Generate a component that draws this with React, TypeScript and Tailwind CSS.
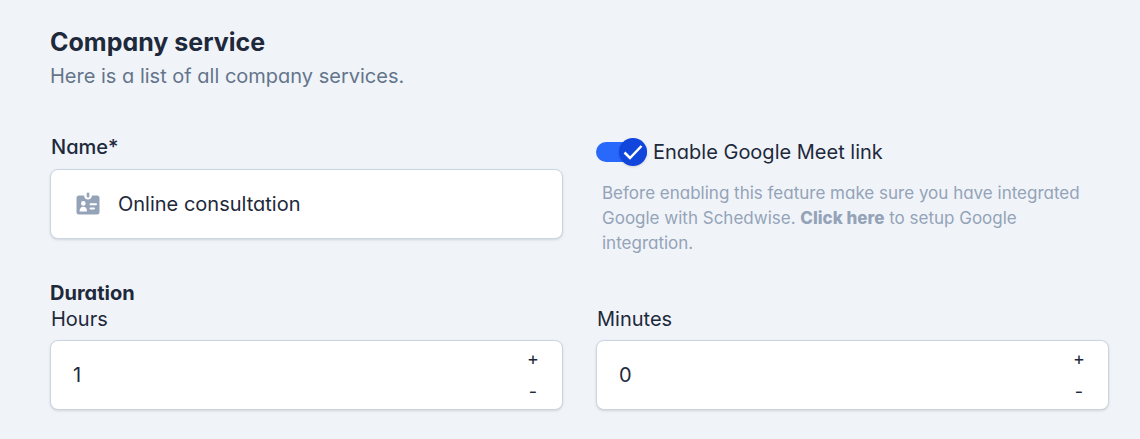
import { useState } from "react"

const inputClass =
  "block w-full h-[70px] rounded-lg border border-[#cbd5e1] bg-white text-[20px] text-[#1e293b] shadow-sm outline-none"

function BadgeIcon() {
  return (
    <svg viewBox="0 0 24 24" className="w-6 h-6" fill="none" aria-hidden="true">
      <path
        d="M3 3.5h5c.3 2.600 1.900 4 4 4s3.700-1.400 4-4h5a2.500 2.500 0 0 1 2.500 2.500v14a2.500 2.500 0 0 1-2.500 2.500H3A2.500 2.500 0 0 1 .5 20V6A2.500 2.500 0 0 1 3 3.500z"
        fill="#94a3b8"
      />
      <rect x="10.700" y="0.500" width="2.600" height="5" rx="1.300" fill="#94a3b8" />
      <circle cx="7.300" cy="11.400" r="2.300" fill="#fff" />
      <path d="M3.600 19.400c0-3 1.300-4.600 3.700-4.600s3.700 1.600 3.700 4.600z" fill="#fff" />
      <path d="M14.500 12.200h5.500M14.500 16.500h3.500" stroke="#fff" strokeWidth="2" strokeLinecap="round" />
    </svg>
  )
}

interface NumberFieldProps {
  id: string
  label: string
  initial: number
}

function NumberField({ id, label, initial }: NumberFieldProps) {
  const [value, setValue] = useState(initial)

  return (
    <div>
      <label htmlFor={id} className="block pl-px text-[20px] leading-[26px] mb-2">
        {label}
      </label>
      <div className="relative">
        <input
          id={id}
          inputMode="numeric"
          value={value}
          onChange={(e) => setValue(Number(e.target.value) || 0)}
          className={`${inputClass} pl-[22px] pr-16`}
        />
        <div className="absolute inset-y-0 right-4 flex w-7 flex-col justify-center text-[18px] leading-6">
          <button type="button" aria-label={`Increase ${label}`} className="h-[33px]" onClick={() => setValue(value + 1)}>
            +
          </button>
          <button
            type="button"
            aria-label={`Decrease ${label}`}
            className="h-[33px]"
            onClick={() => setValue(Math.max(0, value - 1))}
          >
            -
          </button>
        </div>
      </div>
    </div>
  )
}

export default function App() {
  const [name, setName] = useState("Online consultation")
  const [meet, setMeet] = useState(true)

  return (
    <main className="min-h-screen bg-[#f0f4f9] pt-[26px] pb-7 pl-[50px] pr-[31px] font-['Inter',sans-serif] text-[#1e293b] [font-feature-settings:'cv11']">
      <h1 className="text-[25px] leading-8 font-bold">Company service</h1>
      <p className="text-[20px] leading-9 text-[#64748b]">Here is a list of all company services.</p>

      <div className="mt-10 grid grid-cols-2 gap-x-[33px]">
        <div>
          <label htmlFor="name" className="block pl-px text-[20px] leading-[26px] font-medium mb-[9px]">
            Name*
          </label>
          <div className="relative">
            <input
              id="name"
              value={name}
              onChange={(e) => setName(e.target.value)}
              className={`${inputClass} pl-[67px] pr-4`}
            />
            <span className="pointer-events-none absolute inset-y-0 left-[26px] flex items-center">
              <BadgeIcon />
            </span>
          </div>
        </div>

        <div>
          <label className="mt-1 flex h-7 items-center gap-[6px] text-[20px]">
            <input
              type="checkbox"
              role="switch"
              checked={meet}
              onChange={(e) => setMeet(e.target.checked)}
              className="peer sr-only"
            />
            <span className="flex h-5 w-[51px] items-center rounded-full bg-slate-300 peer-checked:justify-end peer-checked:bg-[#2868fb]">
              <span className="flex h-7 w-7 shrink-0 items-center justify-center rounded-full bg-[#1146dc] shadow-sm">
                {meet && (
                  <svg viewBox="0 0 20 20" className="h-5 w-5" fill="none" stroke="#fff" strokeWidth="2.500" aria-hidden="true">
                    <path d="M1.500 10.500l5.500 5.500L18.500 4" />
                  </svg>
                )}
              </span>
            </span>
            Enable Google Meet link
          </label>
          <p className="mt-[15px] pl-[6px] pr-5 text-[17px] leading-[25px] text-[#94a3b8]">
            Before enabling this feature make sure you have integrated Google with Schedwise.{" "}
            <a href="#integrations" className="inline-block font-extrabold">
              Click here
            </a>{" "}
            to setup Google integration.
          </p>
        </div>
      </div>

      <h2 className="mt-6 text-[20px] leading-[26px] font-bold">Duration</h2>
      <div className="grid grid-cols-2 gap-x-[33px]">
        <NumberField id="hours" label="Hours" initial={1} />
        <NumberField id="minutes" label="Minutes" initial={0} />
      </div>
    </main>
  )
}
